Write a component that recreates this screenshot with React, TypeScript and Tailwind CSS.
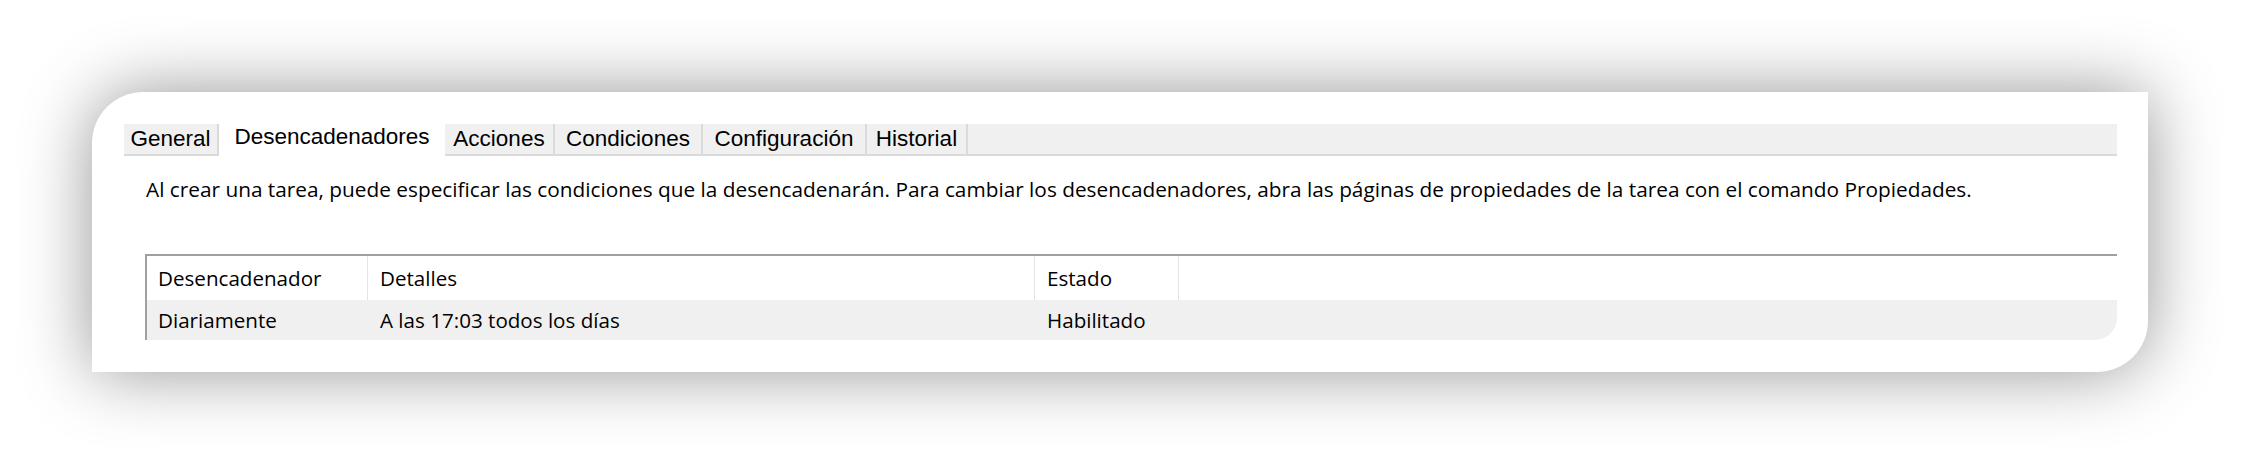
const tabs = [
  { label: 'General', w: 'w-[95px]', active: false },
  { label: 'Desencadenadores', w: 'w-[226px]', active: true },
  { label: 'Acciones', w: 'w-[110px]', active: false },
  { label: 'Condiciones', w: 'w-[148px]', active: false },
  { label: 'Configuración', w: 'w-[164px]', active: false },
  { label: 'Historial', w: 'w-[101px]', active: false },
]

const segoe = { fontFamily: '"Open Sans", "Noto Sans", sans-serif' }

export default function App() {
  return (
    <div className="w-[2241px] h-[464px] bg-white pt-[92px] pl-[92px]">
      <div className="w-[2056px] h-[280px] bg-white rounded-tl-[51px] rounded-br-[51px] shadow-[0_0_70px_rgba(0,0,0,0.42)] pt-[32px] pl-[32px] pr-[31px]">
        {/* Tabs */}
        <div
          className="flex h-[32px] bg-[#f0f0f0] border-b-2 border-[#dadada] text-[22.5px] text-black"
          style={{ fontFamily: '"Liberation Sans", Arial, sans-serif' }}
        >
          {tabs.map((t) =>
            t.active ? (
              <div
                key={t.label}
                className={`${t.w} h-[32px] bg-white flex items-center justify-center pb-[6px] leading-none`}
              >
                {t.label}
              </div>
            ) : (
              <div
                key={t.label}
                className={`${t.w} h-full flex items-center justify-center border-r-2 border-[#dadada] leading-none pt-[1px] first:rounded-tl-[4px]`}
              >
                {t.label}
              </div>
            )
          )}
        </div>

        {/* Description */}
        <div className="mt-[20px] pl-[22px] leading-[26px] text-[20.8px] text-black whitespace-nowrap" style={segoe}>
          Al crear una tarea, puede especificar las condiciones que la desencadenarán. Para cambiar los
          desencadenadores, abra las páginas de propiedades de la tarea con el comando Propiedades.
        </div>

        {/* Table */}
        <div
          className="mt-[52px] ml-[21px] border-l-2 border-t-2 border-[#a0a0a0] rounded-br-[22px] overflow-hidden text-[20.6px] text-black"
          style={segoe}
        >
          <div className="flex h-[44px] bg-white">
            <div className="w-[221px] pl-[11px] flex items-center border-r border-[#e3e3e3]">Desencadenador</div>
            <div className="w-[667px] pl-[12px] flex items-center border-r border-[#e3e3e3]">Detalles</div>
            <div className="w-[144px] pl-[12px] flex items-center border-r border-[#e3e3e3]">Estado</div>
            <div className="flex-1" />
          </div>
          <div className="flex h-[40px] bg-[#f0f0f0] items-center">
            <div className="w-[221px] pl-[11px]">Diariamente</div>
            <div className="w-[667px] pl-[12px]">A las 17:03 todos los días</div>
            <div className="w-[144px] pl-[12px]">Habilitado</div>
          </div>
        </div>
      </div>
    </div>
  )
}
